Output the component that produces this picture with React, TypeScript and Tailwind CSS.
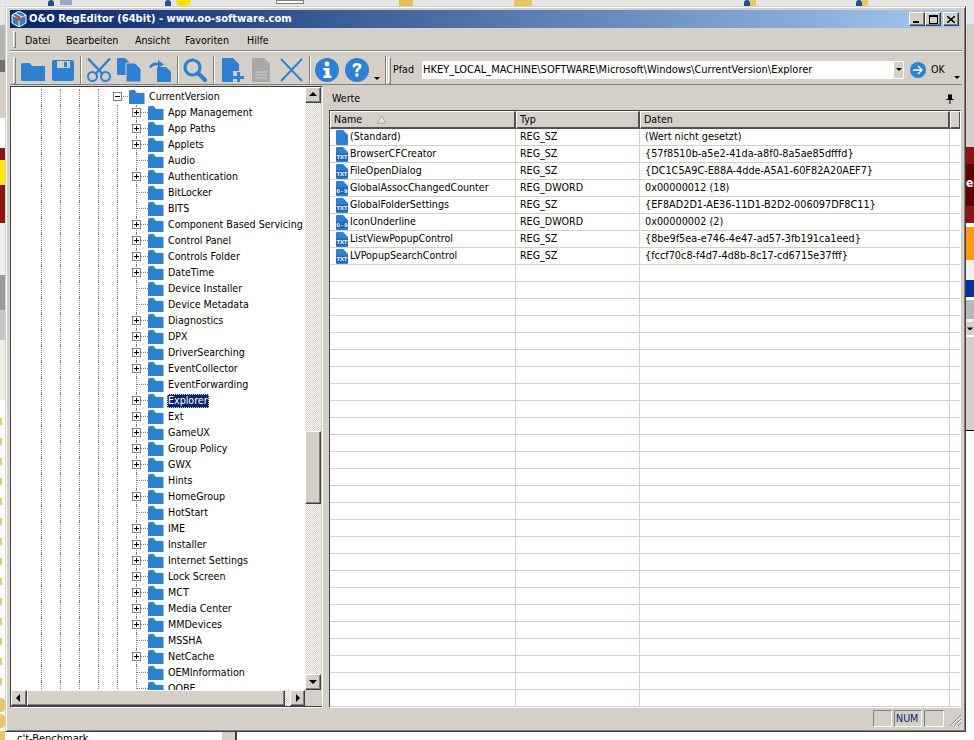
import React from "react";

const B = "#2e81d2";

function Folder() {
  return (
    <svg width="16" height="16" viewBox="0 0 16 16" className="shrink-0">
      <path d="M0 2.5Q0 1 1.5 1H5.5L8 4H15.5V15H0Z" fill={B} />
    </svg>
  );
}

function Expander({ open, left }: { open?: boolean; left: string }) {
  return (
    <span className={`absolute top-[3px] w-[9px] h-[9px] bg-white border border-[#808080] flex items-center justify-center ${left}`}>
      <span className="relative w-[5px] h-[5px] flex items-center justify-center">
        <span className="absolute w-[5px] h-px bg-black" />
        {!open && <span className="absolute w-px h-[5px] bg-black" />}
      </span>
    </span>
  );
}

const tree: [string, boolean][] = [
  ["App Management", true], ["App Paths", true], ["Applets", true], ["Audio", false],
  ["Authentication", true], ["BitLocker", false], ["BITS", false], ["Component Based Servicing", true],
  ["Control Panel", true], ["Controls Folder", true], ["DateTime", true], ["Device Installer", false],
  ["Device Metadata", false], ["Diagnostics", true], ["DPX", true], ["DriverSearching", true],
  ["EventCollector", true], ["EventForwarding", false], ["Explorer", true], ["Ext", true],
  ["GameUX", true], ["Group Policy", true], ["GWX", true], ["Hints", false], ["HomeGroup", true],
  ["HotStart", false], ["IME", true], ["Installer", true], ["Internet Settings", true],
  ["Lock Screen", true], ["MCT", true], ["Media Center", true], ["MMDevices", true], ["MSSHA", false],
  ["NetCache", true], ["OEMInformation", false], ["OOBE", false],
];

function Guides({ count }: { count: number }) {
  const cells = [0, 1, 2, 3, 4].slice(0, count);
  return (
    <>
      <span className="w-[30px] shrink-0" />
      {cells.map((c) => (
        <span key={c} className="w-[19px] shrink-0 self-stretch border-l border-dotted border-[#808080]" />
      ))}
    </>
  );
}

function TreeRow({ label, exp }: { label: string; exp: boolean }) {
  const sel = label === "Explorer";
  return (
    <div className="flex items-center h-4 shrink-0">
      <Guides count={5} />
      <span className="relative w-[12px] shrink-0 self-stretch border-l border-dotted border-[#808080]">
        <span className="absolute left-0 top-[7px] w-[11px] border-t border-dotted border-[#808080]" />
        {exp && <Expander left="left-[-5px]" />}
      </span>
      <Folder />
      <span
        className={`ml-[3px] px-[1px] h-[14px] leading-[13px] whitespace-nowrap ${
          sel ? "bg-[#0a246a] text-white outline-1 outline-dotted outline-[#d4d0c8] -outline-offset-1" : "text-[#000]"
        }`}
      >
        {label}
      </span>
    </div>
  );
}

function Btn({ children, className = "" }: { children: React.ReactNode; className?: string }) {
  return (
    <div className={`flex items-center justify-center bg-[#d4d0c8] border border-t-white border-l-white border-r-[#404040] border-b-[#404040] shadow-[inset_-1px_-1px_0_#808080] shrink-0 ${className}`}>
      {children}
    </div>
  );
}

function Arrow({ dir }: { dir: "up" | "down" | "left" | "right" }) {
  const d = { up: "M1 6L5 2L9 6Z", down: "M1 3H9L5 7Z", left: "M6 1V9L2 5Z", right: "M3 1V9L7 5Z" }[dir];
  return (
    <svg width="10" height="10" viewBox="0 0 10 10">
      <path d={d} fill="#000" />
    </svg>
  );
}

const track = "bg-[repeating-conic-gradient(#d4d0c8_0_25%,#ffffff_0_50%)] bg-[length:2px_2px]";

function Gripper({ h, className = "" }: { h: string; className?: string }) {
  return <div className={`w-[3px] ${h} bg-[#d4d0c8] border border-t-white border-l-white border-r-[#808080] border-b-[#808080] shrink-0 ${className}`} />;
}

function Sep({ className = "" }: { className?: string }) {
  return <div className={`w-[2px] h-[28px] border-l border-l-[#808080] border-r border-r-white shrink-0 ${className}`} />;
}

function ToolIcons() {
  const blue = B;
  return (
    <>
      <svg width="24" height="24" viewBox="0 0 24 24" className="ml-[5px] shrink-0">
        <path d="M0 6.5Q0 5 1.5 5H8.5L11 8H24V23H1.5Q0 23 0 21.5Z" fill={blue} />
      </svg>
      <svg width="22" height="24" viewBox="0 0 22 24" className="ml-[7px] shrink-0">
        <path d="M2 2H20Q22 2 22 4V21Q22 23 20 23H2Q0 23 0 21V4Q0 2 2 2Z" fill={blue} />
        <rect x="5" y="3" width="13" height="7" fill="#d4d0c8" />
        <rect x="12" y="4" width="3" height="5" fill={blue} />
      </svg>
      <Sep className="ml-[6px]" />
      <svg width="24" height="24" viewBox="0 0 24 24" className="ml-[5px] shrink-0" fill="none" stroke={blue} strokeWidth="2">
        <path d="M1 0.5L16 16.5M23 0.5L8 16.5" strokeWidth="2.4" />
        <circle cx="5.5" cy="18.5" r="4.5" />
        <circle cx="18.5" cy="18.5" r="4.5" />
      </svg>
      <svg width="24" height="24" viewBox="0 0 24 24" className="ml-[6px] shrink-0">
        <path d="M1 0H8L12 4V17H1Q0 17 0 16V1Q0 0 1 0Z" fill={blue} />
        <path d="M10 5H18L24 11V23Q24 24 23 24H10Q9 24 9 23V6Q9 5 10 5Z" fill={blue} stroke="#d4d0c8" strokeWidth="1" />
      </svg>
      <svg width="22" height="24" viewBox="0 0 22 24" className="ml-[8px] shrink-0">
        <path d="M0 9Q3 3 9 5V2L15 6.5L9 10V7.5Q5 6.5 2 10Z" fill={blue} />
        <path d="M9 9H17L22 14V23Q22 24 21 24H9Q8 24 8 23V10Q8 9 9 9Z" fill={blue} />
      </svg>
      <Sep className="ml-[6px]" />
      <svg width="24" height="24" viewBox="0 0 24 24" className="ml-[4px] shrink-0" fill="none" stroke={blue}>
        <circle cx="9.5" cy="9.5" r="7.5" strokeWidth="3.2" />
        <path d="M15 15L22 22" strokeWidth="4.2" strokeLinecap="round" />
      </svg>
      <Sep className="ml-[6px]" />
      <svg width="22" height="24" viewBox="0 0 22 24" className="ml-[7px] shrink-0">
        <path d="M1 0H11L17 6V24H1Q0 24 0 23V1Q0 0 1 0Z" fill={blue} />
        <rect x="11" y="13" width="11" height="11" fill="#d4d0c8" />
        <path d="M15 14H18V18H22V21H18V24H15V21H11V18H15Z" fill={blue} />
      </svg>
      <svg width="18" height="24" viewBox="0 0 18 24" className="ml-[8px] shrink-0">
        <path d="M1 0H12L18 6V24H1Q0 24 0 23V1Q0 0 1 0Z" fill="#a8a8a8" />
        <path d="M3 14H15M3 17H15M3 20H15" stroke="#d4d0c8" strokeWidth="1" />
      </svg>
      <svg width="23" height="24" viewBox="0 0 23 24" className="ml-[10px] shrink-0" stroke={blue} strokeWidth="2" fill="none">
        <path d="M1 1L22 23M22 1L1 23" />
      </svg>
      <Sep className="ml-[6px]" />
      <svg width="24" height="24" viewBox="0 0 24 24" className="ml-[4px] shrink-0">
        <circle cx="12" cy="12" r="12" fill={blue} />
        <circle cx="12" cy="6" r="2.4" fill="#fff" />
        <path d="M8.5 10H14.5V17.5H16.5V20H8.5V17.5H10.5V12.5H8.5Z" fill="#fff" />
      </svg>
      <svg width="24" height="24" viewBox="0 0 24 24" className="ml-[6px] shrink-0">
        <circle cx="12" cy="12" r="12" fill={blue} />
        <path d="M7.5 9Q7.5 5 12 5Q16.5 5 16.5 8.5Q16.5 10.5 14 11.8Q13 12.5 13 14.3H10.5V13.5Q10.5 11.3 12.5 10.1Q13.8 9.3 13.8 8.5Q13.8 7.5 12 7.5Q10.2 7.5 10.1 9.5Z" fill="#fff" />
        <rect x="10.5" y="15.5" width="2.8" height="3" fill="#fff" />
      </svg>
    </>
  );
}

const rows: [string, string, string, "" | "TXT" | "0-9"][] = [
  ["(Standard)", "REG_SZ", "(Wert nicht gesetzt)", ""],
  ["BrowserCFCreator", "REG_SZ", "{57f8510b-a5e2-41da-a8f0-8a5ae85dfffd}", "TXT"],
  ["FileOpenDialog", "REG_SZ", "{DC1C5A9C-E88A-4dde-A5A1-60F82A20AEF7}", "TXT"],
  ["GlobalAssocChangedCounter", "REG_DWORD", "0x00000012 (18)", "0-9"],
  ["GlobalFolderSettings", "REG_SZ", "{EF8AD2D1-AE36-11D1-B2D2-006097DF8C11}", "TXT"],
  ["IconUnderline", "REG_DWORD", "0x00000002 (2)", "0-9"],
  ["ListViewPopupControl", "REG_SZ", "{8be9f5ea-e746-4e47-ad57-3fb191ca1eed}", "TXT"],
  ["LVPopupSearchControl", "REG_SZ", "{fccf70c8-f4d7-4d8b-8c17-cd6715e37fff}", "TXT"],
];

function ValIcon({ kind }: { kind: "" | "TXT" | "0-9" }) {
  return (
    <svg width="12" height="15" viewBox="0 0 12 15" className="shrink-0 ml-[6px]">
      <path d="M1 0H7L12 5V14Q12 15 11 15H1Q0 15 0 14V1Q0 0 1 0Z" fill={B} />
      {kind !== "" && (
        <>
          <rect x="0" y="6.5" width="12" height="7" fill="#1f66b4" />
          <text x="6" y="12.3" textAnchor="middle" fontSize="6" fontWeight="700" fill="#fff" fontFamily="Liberation Sans, sans-serif" textLength="11">
            {kind}
          </text>
        </>
      )}
    </svg>
  );
}

function HeadCell({ w, children }: { w: string; children?: React.ReactNode }) {
  return (
    <div className={`h-full flex items-center pl-[3px] bg-[#d4d0c8] border-t border-l border-t-white border-l-white border-r-2 border-r-[#505050] border-b-2 border-b-[#505050] shrink-0 ${w}`}>
      {children}
    </div>
  );
}

function Chunk({ cls, children }: { cls: string; children?: React.ReactNode }) {
  return <div className={`shrink-0 w-full ${cls}`}>{children}</div>;
}

export default function App() {
  const empties = Array.from({ length: 27 });
  const dashes = Array.from({ length: 14 });
  return (
    <div className="relative w-[974px] h-[740px] overflow-hidden bg-[#e6e6e6] font-['DejaVu_Sans',sans-serif] [font-stretch:condensed] text-[10.6px] text-black">
      {/* desktop behind the window: left strip */}
      <div className="absolute left-0 top-0 w-[6px] h-[740px] flex flex-col overflow-hidden">
        <Chunk cls="h-[25px] bg-[#e6e6e6]" />
        <Chunk cls="h-[35px] bg-[#b4b4b4]" />
        <Chunk cls="h-[12px] bg-[#6f6f6f]" />
        <Chunk cls="h-[46px] bg-[#d4d0c8]" />
        <Chunk cls="h-[30px] bg-white" />
        <Chunk cls="h-[12px] bg-[#8b1414]" />
        <Chunk cls="h-[25px] bg-[#ffe90a]" />
        <Chunk cls="h-[38px] bg-[#8b1414]" />
        <Chunk cls="h-[52px] bg-[#f1f1f1]" />
        <Chunk cls="h-[35px] bg-[#9a9a9a]" />
        <Chunk cls="h-[30px] bg-[#c8c8c8]" />
        <Chunk cls="h-[60px] bg-[#eeeee6]" />
        <div className="flex-1 flex flex-col gap-[13px] pt-[18px] bg-white">
          {dashes.map((_, i) => (
            <div key={i} className="w-[2px] h-[7px] shrink-0 bg-[#e6c766]" />
          ))}
          <div className="w-[5px] h-[14px] shrink-0 bg-[#e6c766] rounded-r-sm" />
          <div className="w-[5px] h-[14px] shrink-0 mt-[-11px] bg-[#e6c766] rounded-r-sm" />
        </div>
      </div>
      {/* right strip */}
      <div className="absolute left-[966px] top-0 w-[8px] h-[740px] flex flex-col overflow-hidden">
        <Chunk cls="h-[24px] bg-[#e6e6e6]" />
        <Chunk cls="h-[123px] bg-[#d4d0c8]" />
        <Chunk cls="h-[17px] bg-[#8b1414]" />
        <Chunk cls="h-[42px] bg-[#5c0000] pt-[12px] text-white font-bold text-[12px] leading-[14px] whitespace-nowrap overflow-hidden">er</Chunk>
        <Chunk cls="h-[17px] bg-[#8b1414]" />
        <Chunk cls="h-[4px] bg-white" />
        <Chunk cls="h-[33px] bg-[#ff9a12]" />
        <Chunk cls="h-[20px] bg-[#f0f0f0]" />
        <Chunk cls="h-[17px] bg-[#003399]" />
        <Chunk cls="h-[3px] bg-white" />
        <Chunk cls="h-[19px] bg-[#b8b8b8]" />
        <Chunk cls="h-[3px] bg-[#eeeeee]" />
        <div className="h-[13px] shrink-0 bg-[#d4d0c8] flex items-center"><Arrow dir="down" /></div>
        <Chunk cls="h-[2px] bg-white" />
        <Chunk cls="h-[93px] bg-[#d4d0c8]" />
        <Chunk cls="h-[1px] bg-black" />
        <Chunk cls="flex-1 bg-white" />
      </div>
      {/* top strip icons */}
      <div className="absolute left-0 top-0 w-[974px] h-[7px] flex items-start overflow-hidden">
        <div className="ml-[48px] w-[6px] h-[6px] rounded-t-full bg-[#22508c] shrink-0" />
        <div className="ml-[6px] w-[12px] h-[5px] bg-[#9aa7bd] shrink-0" />
        <div className="ml-[93px] w-[6px] h-[6px] rounded-t-full bg-[#22508c] shrink-0" />
        <div className="ml-[5px] w-[15px] h-[6px] rounded-b-full bg-[#f7dd00] shrink-0" />
        <div className="ml-[85px] w-[28px] h-[4px] bg-white border border-[#808080] shrink-0" />
        <div className="ml-[95px] w-[14px] h-[6px] bg-[#e2bf5c] shrink-0" />
        <div className="ml-[101px] w-[18px] h-[6px] bg-[#e6c766] shrink-0" />
        <div className="ml-[212px] w-[6px] h-[6px] rounded-t-full bg-[#22508c] shrink-0" />
        <div className="w-[6px] h-[6px] bg-[#e6c766] shrink-0" />
        <div className="ml-[100px] w-[6px] h-[6px] rounded-t-full bg-[#22508c] shrink-0" />
        <div className="w-[6px] h-[6px] bg-[#e6c766] shrink-0" />
      </div>
      {/* bottom strip */}
      <div className="absolute left-0 top-[731px] w-[974px] h-[9px] bg-white flex overflow-hidden">
        <div className="w-[5px] h-[9px] bg-[#e6c766] shrink-0" />
        <div className="ml-[12px] w-[205px] pt-[1px] leading-[13px] text-[11px] whitespace-nowrap shrink-0">c't-Benchmark</div>
        <div className="w-[13px] bg-[#d4d0c8] border-r-2 border-r-[#404040] box-content shrink-0" />
      </div>

      {/* window */}
      <div className="absolute left-[5px] top-[6px] w-[961px] h-[726px] bg-[#d4d0c8] border border-t-[#d4d0c8] border-l-[#d4d0c8] border-r-[#404040] border-b-[#404040] shadow-[inset_1px_1px_0_#ffffff,inset_-1px_-1px_0_#808080] p-[3px] flex flex-col">
        {/* title */}
        <div className="h-[18px] mx-[1px] shrink-0 flex items-center bg-gradient-to-r from-[#0a246a] to-[#a6caf0] text-white font-bold text-[11.1px] pl-[1px] pr-[2px]">
          <svg width="16" height="16" viewBox="0 0 16 16" className="shrink-0">
            <path d="M8 0L15 4V12L8 16L1 12V4Z" fill="#2f7fc8" stroke="#fff" strokeWidth="1" />
            <path d="M1 4L8 8L15 4M8 8V16M4 2L11 6" stroke="#fff" strokeWidth="1" fill="none" />
            <path d="M3 6L10 7L13 5L11 9L8 10L5 9Z" fill="#e0452a" />
          </svg>
          <span className="ml-[2px] pt-[1px] whitespace-nowrap">O&amp;O RegEditor (64bit) - www.oo-software.com</span>
          <div className="flex-1" />
          <Btn className="w-[16px] h-[14px]"><span className="w-[6px] h-[2px] bg-black mt-[6px] mr-[2px]" /></Btn>
          <Btn className="w-[16px] h-[14px]"><span className="w-[9px] h-[9px] border border-t-2 border-black" /></Btn>
          <Btn className="w-[16px] h-[14px] ml-[2px]">
            <svg width="8" height="7" viewBox="0 0 8 7"><path d="M0 0L8 7M8 0L0 7" stroke="#000" strokeWidth="1.5" /></svg>
          </Btn>
        </div>
        {/* menu */}
        <div className="h-[23px] ml-[1px] shrink-0 flex items-center border-b border-b-[#808080] pl-[3px]">
          <Gripper h="h-[17px]" />
          <div className="w-[9px] shrink-0" />
          <div className="flex pt-[3px]">
            <span className="w-[41px] shrink-0">Datei</span>
            <span className="w-[69px] shrink-0">Bearbeiten</span>
            <span className="w-[50px] shrink-0">Ansicht</span>
            <span className="w-[62px] shrink-0">Favoriten</span>
            <span>Hilfe</span>
          </div>
        </div>
        {/* toolbar */}
        <div className="h-[34px] ml-[1px] shrink-0 flex items-center border-t border-t-white border-b border-b-[#808080] pl-[3px] pt-[4px]">
          <Gripper h="h-[27px]" />
          <ToolIcons />
          <svg width="6" height="4" viewBox="0 0 6 4" className="ml-[5px] mt-[18px] shrink-0"><path d="M0 0H6L3 3Z" fill="#000" /></svg>
          <Sep className="ml-[5px]" />
          <Gripper h="h-[27px]" className="ml-[1px]" />
          <span className="ml-[2px] w-[29px] shrink-0">Pfad</span>
          <div className="w-[482px] h-[18px] bg-white flex items-center pl-[1px] shrink-0 overflow-hidden text-[11px]">
            <span className="flex-1 whitespace-nowrap">HKEY_LOCAL_MACHINE\SOFTWARE\Microsoft\Windows\CurrentVersion\Explorer</span>
            <div className="w-[11px] h-[18px] bg-[#d4d0c8] flex items-center justify-center shrink-0 border border-white">
              <svg width="6" height="4" viewBox="0 0 6 4"><path d="M0 0H6L3 3Z" fill="#000" /></svg>
            </div>
          </div>
          <svg width="16" height="16" viewBox="0 0 16 16" className="ml-[6px] shrink-0">
            <circle cx="8" cy="8" r="8" fill={B} />
            <path d="M3 8H12M8 4L12 8L8 12" stroke="#fff" strokeWidth="1.4" fill="none" />
          </svg>
          <span className="ml-[5px] shrink-0">OK</span>
          <svg width="6" height="4" viewBox="0 0 6 4" className="ml-[9px] mt-[16px] shrink-0"><path d="M0 0H6L3 3Z" fill="#000" /></svg>
        </div>
        {/* panes */}
        <div className="flex-1 min-h-0 flex pt-[1px]">
          {/* tree */}
          <div className="w-[313px] ml-[1px] h-[622px] shrink-0 flex flex-col border border-t-[#404040] border-l-[#404040] border-r-white border-b-white shadow-[inset_0_-1px_0_#404040,inset_-1px_0_0_#d4d0c8]">
            <div className="flex-1 min-h-0 flex pr-[1px]">
              <div className="w-[294px] shrink-0 bg-white flex flex-col overflow-hidden pt-[2px]">
                <div className="flex items-center h-4 shrink-0">
                  <Guides count={4} />
                  <span className="relative w-[31px] shrink-0 self-stretch">
                    <span className="absolute left-0 top-[7px] w-[11px] border-t border-dotted border-[#808080]" />
                    <Expander open left="left-[-4px]" />
                  </span>
                  <span className="ml-[-19px] shrink-0"><Folder /></span>
                  <span className="ml-[4px] h-[14px] leading-[13px] whitespace-nowrap">CurrentVersion</span>
                </div>
                {tree.map(([l, e]) => (
                  <TreeRow key={l} label={l} exp={e} />
                ))}
              </div>
              <div className={`w-[16px] shrink-0 flex flex-col ${track}`}>
                <Btn className="w-[16px] h-[16px]"><Arrow dir="up" /></Btn>
                <div className="h-[328px] shrink-0" />
                <Btn className="w-[16px] h-[73px]"><span /></Btn>
                <div className="flex-1" />
                <Btn className="w-[16px] h-[16px]"><Arrow dir="down" /></Btn>
              </div>
            </div>
            <div className="h-[16px] shrink-0 flex mb-[1px]">
              <div className={`w-[294px] shrink-0 flex ${track}`}>
                <Btn className="w-[16px] h-[16px]"><Arrow dir="left" /></Btn>
                <Btn className="w-[258px] h-[16px]"><span /></Btn>
                <div className="flex-1" />
                <Btn className="w-[15px] h-[16px]"><Arrow dir="right" /></Btn>
              </div>
            </div>
          </div>
          {/* right pane */}
          <div className="flex-1 min-w-0 flex flex-col pl-[5px] pr-[1px] h-[622px]">
            <div className="h-[24px] shrink-0 flex items-center pl-[4px] pr-[7px] pt-[1px]">
              <span>Werte</span>
              <div className="flex-1" />
              <svg width="8" height="10" viewBox="0 0 8 10">
                <path d="M2 0.5H6V5H7.5V6H0.5V5H2ZM3.5 6H4.5V10H3.5Z" fill="#000" />
                <rect x="4.5" y="1" width="1" height="4" fill="#000" />
              </svg>
            </div>
            <div className="flex-1 min-h-0 flex flex-col border border-t-[#404040] border-l-[#404040] border-r-white border-b-white overflow-hidden bg-white ml-[1px]">
              <div className="h-[18px] shrink-0 flex bg-[#d4d0c8]">
                <HeadCell w="w-[186px]">
                  Name
                  <svg width="11" height="9" viewBox="0 0 11 9" className="ml-[14px]"><path d="M5.5 1L10 8H1Z" fill="#e6e4de" stroke="#a8a49a" strokeWidth="1" /></svg>
                </HeadCell>
                <HeadCell w="w-[124px]">Typ</HeadCell>
                <HeadCell w="w-[310px]">Daten</HeadCell>
                <HeadCell w="w-[11px]" />
              </div>
              <div className="flex-1 min-h-0 overflow-hidden">
                {rows.map(([n, t, d, k]) => (
                  <div key={n} className="h-[17px] flex items-center border-b border-b-[#d4d0c8]">
                    <div className="w-[186px] h-full shrink-0 flex items-center border-r border-r-[#d4d0c8]">
                      <ValIcon kind={k} />
                      <span className="ml-[2px] whitespace-nowrap">{n}</span>
                    </div>
                    <div className="w-[124px] h-full shrink-0 flex items-center pl-[4px] border-r border-r-[#d4d0c8]">{t}</div>
                    <div className="w-[310px] h-full shrink-0 flex items-center pl-[5px] border-r border-r-[#d4d0c8] text-[10.8px]">{d}</div>
                  </div>
                ))}
                {empties.map((_, i) => (
                  <div key={i} className="h-[17px] flex border-b border-b-[#d4d0c8]">
                    <div className="w-[186px] h-full shrink-0 border-r border-r-[#d4d0c8]" />
                    <div className="w-[124px] h-full shrink-0 border-r border-r-[#d4d0c8]" />
                    <div className="w-[310px] h-full shrink-0 border-r border-r-[#d4d0c8]" />
                  </div>
                ))}
              </div>
            </div>
          </div>
        </div>
        {/* status */}
        <div className="h-[20px] shrink-0 flex items-center justify-end">
          <div className="w-[19px] h-[17px] border border-t-[#808080] border-l-[#808080] border-r-white border-b-white" />
          <div className="ml-[2px] w-[28px] h-[17px] border border-t-[#808080] border-l-[#808080] border-r-white border-b-white leading-[15px] text-[#0a246a] pl-[1px]">NUM</div>
          <div className="ml-[2px] w-[20px] h-[17px] border border-t-[#808080] border-l-[#808080] border-r-white border-b-white" />
          <svg width="14" height="14" viewBox="0 0 14 14" className="ml-[4px] mt-[3px]">
            <path d="M13 2L2 13M13 6L6 13M13 10L10 13" stroke="#808080" strokeWidth="1" />
            <path d="M13 3L3 13M13 7L7 13M13 11L11 13" stroke="#fff" strokeWidth="1" />
          </svg>
        </div>
      </div>
    </div>
  );
}
